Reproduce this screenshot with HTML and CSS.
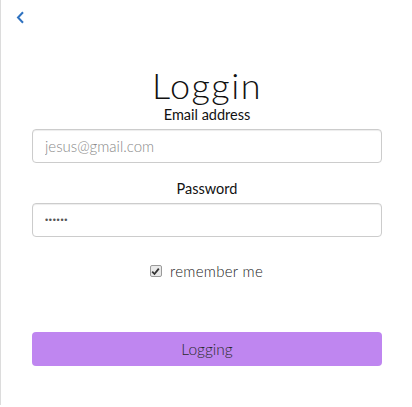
FILE: index.html
```html
<!DOCTYPE html>
<html>
<head>
<meta charset="utf-8">
<link rel="stylesheet" href="styles.css">
</head>
<body>
<div class="page">
  <a class="back" href="#" aria-label="back">
    <svg width="9" height="13" viewBox="0 0 9 13"><path d="M7 1.2 L2 6.5 L7 11.8" fill="none" stroke="#2f72c0" stroke-width="2"/></svg>
  </a>
  <form class="login">
    <h1 class="title">Loggin</h1>
    <label class="label" for="email">Email address</label>
    <input class="field" id="email" type="text" placeholder="jesus@gmail.com">
    <label class="label label-pass" for="pass">Password</label>
    <input class="field field-pass" id="pass" type="password" value="123456">
    <div class="remember">
      <span class="check"><svg width="9" height="9" viewBox="0 0 9 9"><path d="M1.2 4.6 L3.5 7 L7.8 1.6" fill="none" stroke="#333" stroke-width="1.8"/></svg></span>
      <span>remember me</span>
    </div>
    <button class="btn" type="button">Logging</button>
  </form>
</div>
</body>
</html>
```

FILE: styles.css
```css
* { box-sizing: border-box; }
html, body { margin: 0; padding: 0; background: #fff; }
body { font-family: "Lato", "Open Sans", sans-serif; color: #333; font-size: 14px; }
.page {
  width: 412px;
  height: 405px;
  border-left: 1px solid #dcdcdc;
  padding: 11px 0 0 0;
}
.back { display: block; margin-left: 15px; width: 9px; height: 13px; }
.back svg { display: block; }
.login {
  width: 350px;
  margin: 0 0 0 31px;
  display: flex;
  flex-direction: column;
  align-items: stretch;
}
.title {
  margin: 41px 0 0 0;
  font-size: 36px;
  font-weight: 300;
  letter-spacing: 1.5px;
  line-height: 40px;
  text-align: center;
  color: #111;
}
.label {
  display: block;
  text-align: center;
  font-weight: 400;
  font-size: 14.5px;
  line-height: 20px;
  color: #111;
  margin-top: 0;
}
.label-pass { margin-top: 16px; }
.field {
  margin-top: 4px;
  height: 34px;
  border: 1px solid #ccc;
  border-radius: 4px;
  padding: 6px 12px;
  font-family: inherit;
  font-size: 15px;
  color: #555;
  font-weight: 300;
  box-shadow: inset 0 1px 1px rgba(0,0,0,0.075);
}
.field::placeholder { color: #8a8a8a; }
.field-pass {
  font-family: "Liberation Sans", sans-serif;
  font-size: 9px;
  color: #555;
  letter-spacing: 0.7px;
}
.remember {
  display: flex;
  justify-content: center;
  align-items: center;
  gap: 8px;
  margin-top: 25px;
  font-size: 15px;
  letter-spacing: 0.3px;
  color: #222;
  font-weight: 300;
  margin-right: 1px;
}
.check {
  width: 12px;
  height: 12px;
  border: 1px solid #9a9a9a;
  border-radius: 2px;
  background: #e9e9e9;
  display: flex;
  align-items: center;
  justify-content: center;
}
.check svg { display: block; }
.btn {
  margin-top: 52px;
  height: 34px;
  border: none;
  border-radius: 4px;
  background: #bf86f0;
  color: #2a2a2a;
  font-family: inherit;
  font-size: 15.5px;
  font-weight: 300;
}
```
